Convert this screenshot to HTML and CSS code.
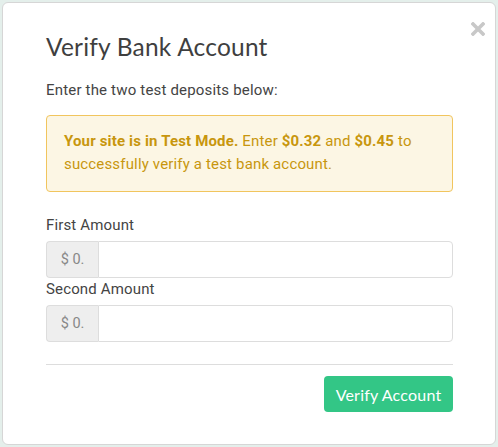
FILE: index.html
```html
<!DOCTYPE html>
<html>
<head>
<meta charset="utf-8">
<link rel="stylesheet" href="styles.css">
</head>
<body>
<div class="modal">
  <button class="close" aria-label="Close">
    <svg width="14" height="14" viewBox="0 0 14 14"><path d="M2 2L12 12M12 2L2 12" stroke="#c8c8c8" stroke-width="3.6" stroke-linecap="square"/></svg>
  </button>
  <h2 class="title">Verify Bank Account</h2>
  <p class="intro">Enter the two test deposits below:</p>
  <div class="alert"><strong>Your site is in Test Mode.</strong> Enter <strong>$0.32</strong> and <strong>$0.45</strong> to successfully verify a test bank account.</div>
  <label class="label">First Amount</label>
  <div class="group"><span class="addon">$ 0.</span><input class="field" type="text"></div>
  <label class="label second">Second Amount</label>
  <div class="group"><span class="addon">$ 0.</span><input class="field" type="text"></div>
  <hr class="rule">
  <div class="actions"><button class="btn">Verify Account</button></div>
</div>
</body>
</html>
```
FILE: styles.css
```css
html, body { margin: 0; padding: 0; }
body {
  background: #e4efeb;
  font-family: Roboto, "Liberation Sans", sans-serif;
  height: 447px;
  overflow: hidden;
}
.modal {
  position: relative;
  margin: 2px 2px 0 2px;
  height: 443px;
  box-sizing: border-box;
  background: #fff;
  border: 1px solid #d6d6d6;
  border-radius: 6px;
  padding: 0 42px 0 43px;
}
.close {
  position: absolute;
  top: 19px;
  right: 10px;
  border: 0;
  background: none;
  padding: 0;
  width: 14px;
  height: 14px;
}
.close svg { display: block; }
.title {
  margin: 0;
  padding-top: 29px;
  font-family: Lato, "Open Sans", sans-serif;
  font-weight: 400;
  font-size: 24.5px;
  line-height: 30px;
  color: #3f3f3f;
  letter-spacing: 0.2px;
}
.intro {
  margin: 18px 0 0;
  font-size: 15px;
  letter-spacing: 0.18px;
  line-height: 20px;
  color: #444;
}
.alert {
  margin-top: 15px;
  background: #fcf6e4;
  border: 1px solid #f1c55e;
  border-radius: 4px;
  padding: 14px 16px 15px 17px;
  color: #c8960e;
  font-size: 15px;
  letter-spacing: 0.16px;
  line-height: 23px;
}
.alert strong { font-weight: 700; }
.label {
  display: block;
  margin-top: 23px;
  font-size: 15px;
  letter-spacing: 0.15px;
  line-height: 20px;
  color: #444;
}
.label.second { margin-top: 1px; }
.group {
  display: flex;
  margin-top: 6px;
  height: 37px;
}
.addon {
  width: 52px;
  box-sizing: border-box;
  display: flex;
  align-items: center;
  justify-content: center;
  background: #eee;
  border: 1px solid #ddd;
  border-right: 0;
  border-radius: 4px 0 0 4px;
  color: #888;
  font-size: 14.5px;
}
.field {
  flex: 1;
  min-width: 0;
  border: 1px solid #ddd;
  border-radius: 0 4px 4px 0;
  margin: 0;
  padding: 0 10px;
  font: inherit;
  background: #fff;
}
.rule {
  margin: 22px 0 0;
  border: 0;
  border-top: 1px solid #ddd;
}
.actions {
  display: flex;
  justify-content: flex-end;
  margin-top: 11px;
}
.btn {
  width: 129px;
  height: 36px;
  border: 0;
  border-radius: 4px;
  background: #33c686;
  color: #fff;
  font-family: Lato, "Open Sans", sans-serif;
  font-size: 16px;
  letter-spacing: 0.2px;
}
```
